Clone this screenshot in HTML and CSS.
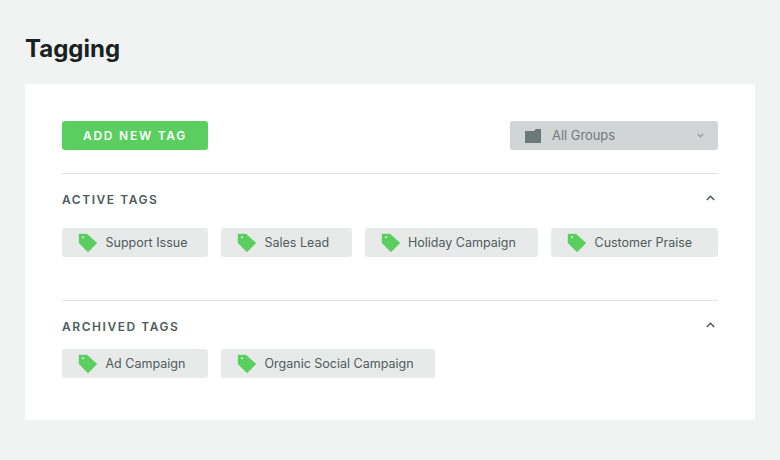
FILE: index.html
```html
<!DOCTYPE html>
<html lang="en">
<head>
  <meta charset="UTF-8">
  <meta name="viewport" content="width=device-width, initial-scale=1.0">
  <title>Tagging</title>
  <link rel="stylesheet" href="styles.css">
</head>
<body>
  <svg class="defs" width="0" height="0">
    <symbol id="tag" viewBox="0 0 20 20">
      <path d="M1 1 L9 1 L19 10 L10 19 L1 10 Z" fill="#5ace5f" stroke="#5ace5f" stroke-width="0.4" stroke-linejoin="round"/>
      <circle cx="5" cy="4.2" r="1" fill="#e6f7e7"/>
    </symbol>
  </svg>

  <h1>Tagging</h1>

  <div class="card">
    <!-- Toolbar -->
    <div class="toolbar">
      <button class="add-btn">ADD NEW TAG</button>
      <div class="group-select">
        <svg class="folder" width="16" height="14" viewBox="0 0 16 14"><path d="M0 2 L9 2 L11 0 L16 0 L16 14 L0 14 Z" fill="#6b7a79"/></svg>
        <span class="group-label">All Groups</span>
        <svg class="caret" width="7" height="5" viewBox="0 0 7 5"><path d="M0.7 0.8 L3.5 3.6 L6.3 0.8" fill="none" stroke="#8b9796" stroke-width="1.2"/></svg>
      </div>
    </div>

    <!-- Active -->
    <div class="section active">
      <div class="section-head">
        <h2>ACTIVE TAGS</h2>
        <svg class="caret-up" width="9" height="6" viewBox="0 0 9 6"><path d="M0.8 5 L4.5 1.3 L8.2 5" fill="none" stroke="#4a5756" stroke-width="1.5"/></svg>
      </div>
      <div class="tags">
        <div class="tag w146"><svg width="20" height="20"><use href="#tag"/></svg><span>Support Issue</span></div>
        <div class="tag w131"><svg width="20" height="20"><use href="#tag"/></svg><span>Sales Lead</span></div>
        <div class="tag w173"><svg width="20" height="20"><use href="#tag"/></svg><span>Holiday Campaign</span></div>
        <div class="tag w167"><svg width="20" height="20"><use href="#tag"/></svg><span>Customer Praise</span></div>
      </div>
    </div>

    <!-- Archived -->
    <div class="section archived">
      <div class="section-head">
        <h2>ARCHIVED TAGS</h2>
        <svg class="caret-up" width="9" height="6" viewBox="0 0 9 6"><path d="M0.8 5 L4.5 1.3 L8.2 5" fill="none" stroke="#4a5756" stroke-width="1.5"/></svg>
      </div>
      <div class="tags">
        <div class="tag w146"><svg width="20" height="20"><use href="#tag"/></svg><span>Ad Campaign</span></div>
        <div class="tag w214"><svg width="20" height="20"><use href="#tag"/></svg><span>Organic Social Campaign</span></div>
      </div>
    </div>
  </div>
</body>
</html>
```

FILE: styles.css
```css
body {
  margin: 0;
  padding: 0;
  background: #f1f3f2;
  font-family: "Inter", "Liberation Sans", sans-serif;
  color: #4f5b5a;
}

.defs {
  position: absolute;
}

h1 {
  margin: 0;
  padding: 33px 0 0 25px;
  height: 84px;
  box-sizing: border-box;
  font-size: 24px;
  line-height: 32px;
  font-weight: 700;
  color: #182222;
}

.card {
  margin: 0 25px;
  height: 336px;
  box-sizing: border-box;
  background: white;
  padding: 37px 37px 0;
}

.toolbar {
  display: flex;
  justify-content: space-between;
  height: 29px;
}

.add-btn {
  width: 146px;
  height: 29px;
  padding: 0;
  border: none;
  border-radius: 3px;
  background: #5ace5f;
  color: white;
  font-family: inherit;
  font-size: 12px;
  font-weight: 600;
  letter-spacing: 1.75px;
}

.group-select {
  width: 208px;
  height: 29px;
  display: flex;
  align-items: center;
  box-sizing: border-box;
  padding: 0 14px 0 15px;
  border-radius: 3px;
  background: #d1d5d5;
  color: #6e7b7a;
  font-size: 12.9px;
}

.group-label {
  flex: 1;
  margin-left: 11px;
}

.section {
  border-top: 1px solid #e2e4e4;
}

.active {
  margin-top: 23px;
  height: 126px;
}

.section-head {
  display: flex;
  justify-content: space-between;
  align-items: center;
  box-sizing: border-box;
  padding-right: 3px;
}

.active .section-head {
  height: 51px;
}

.archived .section-head {
  height: 48px;
  padding-top: 2px;
}

h2 {
  margin: 0;
  font-size: 12px;
  font-weight: 600;
  letter-spacing: 1.55px;
  color: #4f5b5a;
}

.caret-up {
  margin-top: -3px;
}

.tags {
  display: flex;
  gap: 13px;
  margin-top: 3px;
}

.archived .tags {
  margin-top: 0;
}

.tag {
  height: 29px;
  display: flex;
  align-items: center;
  box-sizing: border-box;
  padding-left: 16px;
  border-radius: 3px;
  background: #e8eaea;
  font-size: 12.5px;
  color: #4f5b5a;
}

.tag span {
  margin-left: 7.5px;
}

.w146 { width: 146px; }
.w131 { width: 130.5px; }
.w173 { width: 173.5px; }
.w167 { width: 167px; }
.w214 { width: 214px; }
```
